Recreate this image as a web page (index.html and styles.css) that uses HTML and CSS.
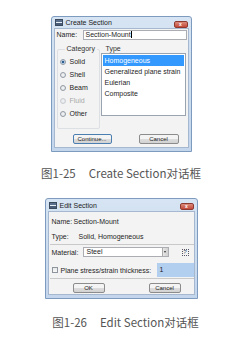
FILE: index.html
```html
<!DOCTYPE html>
<html lang="zh-CN">
<head>
    <meta charset="UTF-8">
    <meta name="viewport" content="width=device-width, initial-scale=1.0">
    <title>Create / Edit Section</title>
    <link rel="stylesheet" href="styles.css">
</head>
<body>
<div class="page">

    <!-- Figure 1-25: Create Section dialog -->
    <div class="win win-create">
        <div class="titlebar">
            <span class="app-icon"></span>
            <span class="title">Create Section</span>
            <span class="close">x</span>
        </div>
        <div class="client">
            <div class="name-row">
                <span class="lbl">Name:</span>
                <div class="field">Section-Mount<span class="caret"></span></div>
            </div>
            <div class="groups">
                <fieldset class="group cat">
                    <legend>Category</legend>
                    <div class="radio on"><span class="dot"></span>Solid</div>
                    <div class="radio"><span class="dot"></span>Shell</div>
                    <div class="radio"><span class="dot"></span>Beam</div>
                    <div class="radio off"><span class="dot"></span>Fluid</div>
                    <div class="radio"><span class="dot"></span>Other</div>
                </fieldset>
                <fieldset class="group type">
                    <legend>Type</legend>
                    <div class="list">
                        <div class="item sel">Homogeneous</div>
                        <div class="item">Generalized plane strain</div>
                        <div class="item">Eulerian</div>
                        <div class="item">Composite</div>
                    </div>
                </fieldset>
            </div>
            <div class="buttons create-btns">
                <button class="btn default">Continue...</button>
                <button class="btn">Cancel</button>
            </div>
        </div>
    </div>

    <div class="caption">图1-25<span class="sp"></span>Create Section对话框</div>

    <!-- Figure 1-26: Edit Section dialog -->
    <div class="win win-edit">
        <div class="titlebar">
            <span class="app-icon"></span>
            <span class="title">Edit Section</span>
            <span class="close">x</span>
        </div>
        <div class="client edit-client">
            <div class="info-row"><span class="k">Name:</span>Section-Mount</div>
            <div class="info-row"><span class="k type-k">Type:</span>Solid, Homogeneous</div>
            <div class="sep"></div>
            <div class="mat-row">
                <span class="lbl">Material:</span>
                <div class="combo">Steel<span class="drop"></span></div>
                <span class="help">?</span>
            </div>
            <div class="thick-row">
                <span class="check"></span>
                <span class="lbl">Plane stress/strain thickness:</span>
                <div class="thick">1</div>
            </div>
            <div class="sep"></div>
            <div class="buttons edit-btns">
                <button class="btn">OK</button>
                <button class="btn">Cancel</button>
            </div>
        </div>
    </div>

    <div class="caption cap2">图1-26<span class="sp"></span>Edit Section对话框</div>

</div>
</body>
</html>
```

FILE: styles.css
```css
/* Page */
body, html {
    margin: 0;
    padding: 0;
    width: 241px;
    height: 340px;
    overflow: hidden;
    background: #fff;
    font-family: "Liberation Sans", Arial, sans-serif;
}

.page {
    display: flex;
    flex-direction: column;
    align-items: center;
    padding-top: 16px;
}

/* Window frame (Win7 basic look) */
.win {
    box-sizing: border-box;
    display: flex;
    flex-direction: column;
    border: 1px solid #7d9bbf;
    border-radius: 3px 3px 0 0;
    background: linear-gradient(#d6e4f3, #c3d6ec);
    padding: 0 2px 3px;
    color: #1e1e1e;
    font-size: 7px;
}

.win-create {
    width: 141px;
    height: 136px;
    margin-left: 1px;
}

.win-edit {
    width: 153px;
    height: 101px;
    margin-left: 1px;
    margin-top: 17px;
}

.titlebar {
    height: 11px;
    display: flex;
    align-items: center;
    padding-left: 1px;
}

.win-edit .titlebar {
    height: 12px;
}

.app-icon {
    width: 8px;
    height: 7px;
    margin-right: 3px;
    background: linear-gradient(#5a6f8c 0 40%, #e8eef5 40% 55%, #4a5d78 55%);
    border: 1px solid #3b4a5f;
    box-sizing: border-box;
}

.title {
    font-size: 7px;
    color: #222;
}

.close {
    margin-left: auto;
    margin-right: 1px;
    margin-top: 3px;
    width: 14px;
    height: 7px;
    border-radius: 2px;
    background: linear-gradient(#dc8c7c, #c4493a);
    border: 1px solid #8e3a30;
    box-sizing: border-box;
    color: #fff;
    font-size: 5px;
    line-height: 5px;
    text-align: center;
    font-weight: bold;
}

.client {
    flex: 1;
    display: flex;
    flex-direction: column;
    background: #f3f3f3;
    border: 1px solid #a6b8cf;
    padding: 0 1px 0 2px;
}

/* Create Section */
.name-row {
    display: flex;
    align-items: center;
    height: 11px;
}

.name-row .lbl {
    width: 26px;
}

.field {
    flex: 1;
    height: 10px;
    box-sizing: border-box;
    background: #fff;
    border: 1px solid #abadb3;
    padding-left: 2px;
    line-height: 8px;
    display: flex;
    align-items: center;
}

.caret {
    width: 1px;
    height: 7px;
    background: #000;
}

.groups {
    display: flex;
    margin-top: 5px;
    height: 84px;
}

.group {
    margin: 0;
    padding: 0;
    border: 1px solid #dcdfe3;
    border-radius: 2px;
    min-width: 0;
}

.group legend {
    padding: 0 2px;
    font-size: 7px;
    line-height: 8px;
    color: #333;
}

.cat {
    width: 43px;
    box-sizing: border-box;
}

.cat legend {
    margin-left: 7px;
}

.type {
    flex: 1;
    border-color: transparent;
}

.type legend {
    margin-left: 3px;
}

.radio {
    height: 13px;
    display: flex;
    align-items: center;
    padding-left: 2px;
}

.cat .radio:first-of-type {
    margin-top: 2px;
}

.dot {
    width: 6px;
    height: 6px;
    border-radius: 50%;
    box-sizing: border-box;
    border: 1px solid #939aa3;
    background: radial-gradient(#f6f6f6, #d9dde2);
    margin-right: 4px;
}

.radio.on .dot {
    background: radial-gradient(#2c5d8f 0 35%, #9fc0e0 45%, #e4ebf3 80%);
}

.radio.off {
    color: #a8a8a8;
}

.radio.off .dot {
    border-color: #c8ccd1;
}

.list {
    height: 63px;
    box-sizing: border-box;
    background: #fff;
    border: 1px solid #9aa3b0;
    padding: 1px;
}

.item {
    height: 11px;
    line-height: 11px;
    padding-left: 2px;
}

.item.sel {
    background: #3399ff;
    color: #fff;
}

.buttons {
    display: flex;
}

.create-btns {
    margin-top: 5px;
    padding-left: 16px;
    gap: 27px;
}

.btn {
    height: 10px;
    box-sizing: border-box;
    padding: 0;
    border: 1px solid #8c8c8c;
    border-radius: 2px;
    background: linear-gradient(#f4f4f4 0 45%, #dcdcdc 55%, #d2d2d2);
    font-family: "Liberation Sans", Arial, sans-serif;
    font-size: 6px;
    line-height: 8px;
    color: #222;
}

.create-btns .btn {
    width: 40px;
}

.btn.default {
    border-color: #4b7fb2;
    width: 39px;
}

/* Edit Section */
.edit-client {
    padding: 0 1px 0 3px;
}

.info-row {
    height: 12px;
    line-height: 12px;
    margin-top: 3px;
}

.info-row:first-child {
    margin-top: 4px;
}

.k {
    display: inline-block;
    width: 22px;
}

.type-k {
    width: 27px;
}

.sep {
    height: 0;
    border-top: 1px solid #c9c9c9;
    margin: 1px -1px 0 -2px;
}

.mat-row {
    display: flex;
    align-items: center;
    margin-top: 2px;
    height: 10px;
}

.mat-row .lbl {
    width: 31px;
}

.combo {
    width: 86px;
    height: 10px;
    box-sizing: border-box;
    background: #fff;
    border: 1px solid #abadb3;
    padding-left: 3px;
    line-height: 8px;
    position: relative;
}

.drop {
    position: absolute;
    right: 0;
    top: 0;
    width: 5px;
    height: 8px;
    background: linear-gradient(90deg, #e6e6e6, #d0d0d0);
    border-left: 1px solid #aaa;
}

.drop::after {
    content: "";
    position: absolute;
    left: 1px;
    top: 3px;
    border-left: 1.5px solid transparent;
    border-right: 1.5px solid transparent;
    border-top: 2px solid #333;
}

.help {
    margin-left: 13px;
    width: 7px;
    height: 7px;
    box-sizing: border-box;
    border: 1px dotted #556;
    font-size: 6px;
    line-height: 5px;
    text-align: center;
    font-style: italic;
    color: #2a3d66;
}

.thick-row {
    display: flex;
    align-items: center;
    margin-top: 6px;
    height: 14px;
}

.check {
    width: 6px;
    height: 6px;
    box-sizing: border-box;
    border: 1px solid #8f959c;
    background: linear-gradient(#e6e8eb, #f8f8f8);
    margin-right: 3px;
}

.thick-row .lbl {
    width: 96px;
}

.thick {
    flex: 1;
    align-self: stretch;
    background: #b3cff0;
    padding-left: 3px;
    line-height: 14px;
    margin-right: -1px;
}

.edit-btns {
    margin-top: 4px;
    padding-left: 21px;
    gap: 44px;
}

.edit-btns .btn {
    width: 32px;
}

/* Captions */
.caption {
    margin-top: 14px;
    font-family: "Noto Sans CJK SC", sans-serif;
    font-size: 11.5px;
    line-height: 15px;
    color: #555;
    margin-left: 1px;
}

.caption .sp {
    display: inline-block;
    width: 13px;
}

.cap2 {
    margin-top: 16px;
    margin-left: 10px;
}
```
